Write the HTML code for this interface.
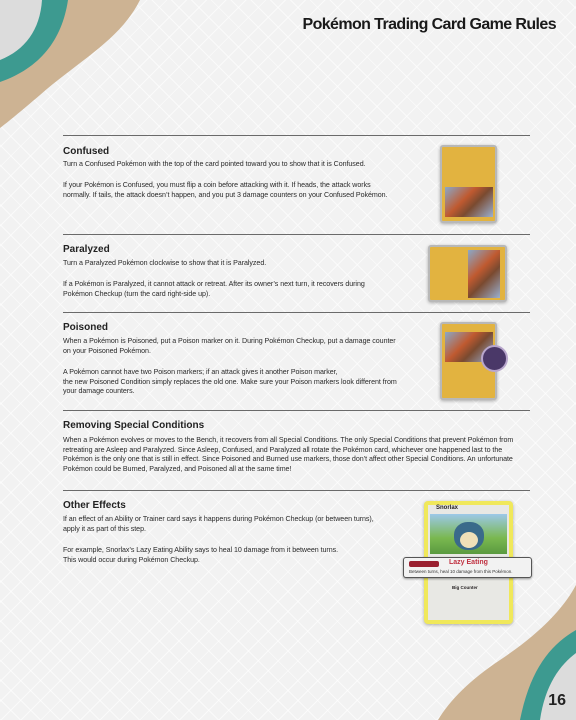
<!DOCTYPE html>
<html><head><meta charset="utf-8"><style>
*{margin:0;padding:0;box-sizing:border-box}
body{width:576px;height:720px;overflow:hidden;position:relative;background:#f2f2f2;font-family:"Liberation Sans",sans-serif;color:#231f20}
.bg{position:absolute;inset:0;background:repeating-linear-gradient(45deg,rgba(255,255,255,.6) 0 1px,transparent 1px 14px),repeating-linear-gradient(-45deg,rgba(255,255,255,.6) 0 1px,transparent 1px 14px)}
h1{position:absolute;right:20px;top:16px;font-size:16px;font-weight:bold;letter-spacing:-0.6px;color:#1a1a1a}
.rule{position:absolute;left:63px;width:467px;height:1px;background:#6a6a6a}
h2{position:absolute;left:63px;font-size:10px;font-weight:bold;color:#222}
p{position:absolute;left:63px;font-size:7.1px;line-height:9.6px;color:#2a2a2a;letter-spacing:-0.05px;white-space:nowrap}
.card{position:absolute;background:#e2b340;border:2px solid #b8b8b8;border-radius:3px;box-shadow:0 1px 3px rgba(0,0,0,.3)}
.art{position:absolute;background:linear-gradient(135deg,#8aa8c8,#c05a30 40%,#7a4a30 60%,#9ab0d0);}
.pg{position:absolute;right:10px;bottom:10px;font-size:16px;font-weight:bold;color:#222}
</style></head><body>
<div class="bg"></div>
<svg style="position:absolute;left:0;top:0" width="140" height="130">
<path d="M0 0 H140 C120 40 80 60 40 95 C20 112 8 122 0 128 Z" fill="#cdb393"/>
<path d="M0 0 H68 C62 40 40 68 0 82 Z" fill="#3d9a90"/>
<path d="M0 0 H42 C40 30 25 50 0 60 Z" fill="#dcdcdc"/>
</svg>
<svg style="position:absolute;left:420px;top:585px" width="156" height="135">
<path d="M156 0 C140 30 110 55 80 75 C50 95 30 115 18 135 H156 Z" fill="#cdb393"/>
<path d="M156 45 C130 60 110 85 100 135 H156 Z" fill="#3d9a90"/>
<path d="M156 68 C140 80 125 100 120 135 H156 Z" fill="#dcdcdc"/>
</svg>
<h1>Pokémon Trading Card Game Rules</h1>

<div class="rule" style="top:135px"></div>
<h2 style="top:146px">Confused</h2>
<p style="top:160px">Turn a Confused Pokémon with the top of the card pointed toward you to show that it is Confused.</p>
<p style="top:181px">If your Pokémon is Confused, you must flip a coin before attacking with it. If heads, the attack works<br>normally. If tails, the attack doesn’t happen, and you put 3 damage counters on your Confused Pokémon.</p>
<div class="card" style="left:440px;top:145px;width:57px;height:78px"><div class="art" style="left:3px;top:40px;width:48px;height:30px"></div></div>

<div class="rule" style="top:234px"></div>
<h2 style="top:244px">Paralyzed</h2>
<p style="top:259px">Turn a Paralyzed Pokémon clockwise to show that it is Paralyzed.</p>
<p style="top:280px">If a Pokémon is Paralyzed, it cannot attack or retreat. After its owner’s next turn, it recovers during<br>Pokémon Checkup (turn the card right-side up).</p>
<div class="card" style="left:428px;top:245px;width:79px;height:57px"><div class="art" style="left:38px;top:3px;width:32px;height:48px"></div></div>

<div class="rule" style="top:312px"></div>
<h2 style="top:322px">Poisoned</h2>
<p style="top:337px">When a Pokémon is Poisoned, put a Poison marker on it. During Pokémon Checkup, put a damage counter<br>on your Poisoned Pokémon.</p>
<p style="top:368px">A Pokémon cannot have two Poison markers; if an attack gives it another Poison marker,<br>the new Poisoned Condition simply replaces the old one. Make sure your Poison markers look different from<br>your damage counters.</p>
<div class="card" style="left:440px;top:322px;width:57px;height:78px"><div class="art" style="left:3px;top:8px;width:48px;height:30px"></div></div>
<div style="position:absolute;left:481px;top:345px;width:27px;height:27px;border-radius:50%;background:#4a3868;border:2px solid #b8a6cc"></div>

<div class="rule" style="top:410px"></div>
<h2 style="top:420px">Removing Special Conditions</h2>
<p style="top:436px">When a Pokémon evolves or moves to the Bench, it recovers from all Special Conditions. The only Special Conditions that prevent Pokémon from<br>retreating are Asleep and Paralyzed. Since Asleep, Confused, and Paralyzed all rotate the Pokémon card, whichever one happened last to the<br>Pokémon is the only one that is still in effect. Since Poisoned and Burned use markers, those don’t affect other Special Conditions. An unfortunate<br>Pokémon could be Burned, Paralyzed, and Poisoned all at the same time!</p>

<div class="rule" style="top:490px"></div>
<h2 style="top:500px">Other Effects</h2>
<p style="top:515px">If an effect of an Ability or Trainer card says it happens during Pokémon Checkup (or between turns),<br>apply it as part of this step.</p>
<p style="top:546px">For example, Snorlax’s Lazy Eating Ability says to heal 10 damage from it between turns.<br>This would occur during Pokémon Checkup.</p>

<div style="position:absolute;left:424px;top:501px;width:89px;height:123px;background:#f0e85a;border-radius:4px;box-shadow:0 1px 3px rgba(0,0,0,.3)">
<div style="position:absolute;left:4px;top:4px;right:4px;bottom:4px;background:#e8e8e4"></div>
<div style="position:absolute;left:12px;top:4px;font-size:6px;font-weight:bold">Snorlax</div>
<div style="position:absolute;left:6px;top:13px;width:77px;height:40px;background:linear-gradient(#9cc8e8,#7ab850 60%,#5a9a40)"><div style="position:absolute;left:24px;top:8px;width:30px;height:28px;border-radius:45%;background:#3a6a8a"></div><div style="position:absolute;left:30px;top:18px;width:18px;height:16px;border-radius:50%;background:#f0e0b8"></div></div>
<div style="position:absolute;left:28px;top:84px;font-size:4.5px;font-weight:bold">Big Counter</div>
</div>
<div style="position:absolute;left:403px;top:557px;width:129px;height:21px;background:#f2f2f2;border:1.5px solid #555;border-radius:3px;box-shadow:0 1px 2px rgba(0,0,0,.4)">
<div style="position:absolute;left:5px;top:3px;width:30px;height:6px;background:#9a2030;border-radius:2px"></div>
<div style="position:absolute;left:45px;top:1px;font-size:7px;font-weight:bold;color:#c03040">Lazy Eating</div>
<div style="position:absolute;left:5px;top:11px;font-size:4.5px;color:#333">Between turns, heal 10 damage from this Pokémon.</div>
</div>
<div class="pg">16</div>
</body></html>
